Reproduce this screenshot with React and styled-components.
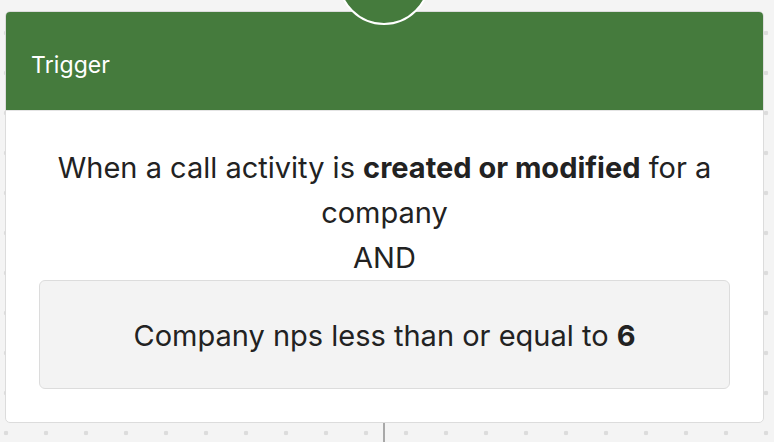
import React from "react";
import styled, { createGlobalStyle } from "styled-components";

const Global = createGlobalStyle`
  html, body { margin: 0; padding: 0; }
  body {
    background: #f4f4f4;
    font-family: Inter, "Liberation Sans", Arial, sans-serif;
    overflow: hidden;
  }
`;

const Canvas = styled.div`
  position: relative;
  width: 774px;
  height: 442px;
  overflow: hidden;
  background-color: #f4f4f4;
  background-image: radial-gradient(circle at 6px 33px, #dcdcdc 2px, transparent 2.6px);
  background-size: 40px 40px;
  padding: 11px 10px 0 5px;
  box-sizing: border-box;
  display: flex;
  flex-direction: column;
  align-items: flex-start;
`;

const Card = styled.div`
  position: relative;
  flex-shrink: 0;
  width: 759px;
  box-sizing: border-box;
  background: #fff;
  border: 1px solid #dcdcdc;
  border-radius: 5px;
  overflow: hidden;
`;

const Header = styled.div`
  height: 99px;
  box-sizing: border-box;
  background: #457b3d;
  border-bottom: 1px solid #e4e4e4;
  display: flex;
  align-items: center;
  padding: 8px 0 0 25px;
  color: #fff;
  font-size: 23px;
  font-weight: 400;
  letter-spacing: 0.1px;
`;

const Body = styled.div`
  padding: 34px 33px 33px;
  display: flex;
  flex-direction: column;
  align-items: stretch;
`;

const Sentence = styled.div`
  text-align: center;
  font-size: 29px;
  line-height: 45px;
  color: #222;
  padding: 0 10px;
  b { font-weight: 700; }
`;

const Condition = styled.div`
  height: 109px;
  box-sizing: border-box;
  background: #f3f3f3;
  border: 1px solid #dcdcdc;
  border-radius: 6px;
  display: flex;
  align-items: center;
  justify-content: center;
  font-size: 29px;
  color: #222;
  padding-top: 2px;
  b { font-weight: 700; }
`;

const Node = styled.div`
  position: absolute;
  z-index: 2;
  left: 338px;
  top: -67px;
  width: 92px;
  height: 92px;
  box-sizing: border-box;
  border-radius: 50%;
  background: #457b3d;
  border: 2px solid #fff;
`;

const Connector = styled.div`
  flex-shrink: 0;
  width: 2px;
  height: 30px;
  margin-left: 378px;
  background: #a8a8a8;
`;

export default function App() {
  return (
    <>
      <Global />
      <Canvas>
        <Node />
        <Card>
          <Header>Trigger</Header>
          <Body>
            <Sentence>
              When a call activity is <b>created or modified</b> for a company
              <br />
              AND
            </Sentence>
            <Condition>
              <span>
                Company nps less than or equal to <b>6</b>
              </span>
            </Condition>
          </Body>
        </Card>
        <Connector />
      </Canvas>
    </>
  );
}
